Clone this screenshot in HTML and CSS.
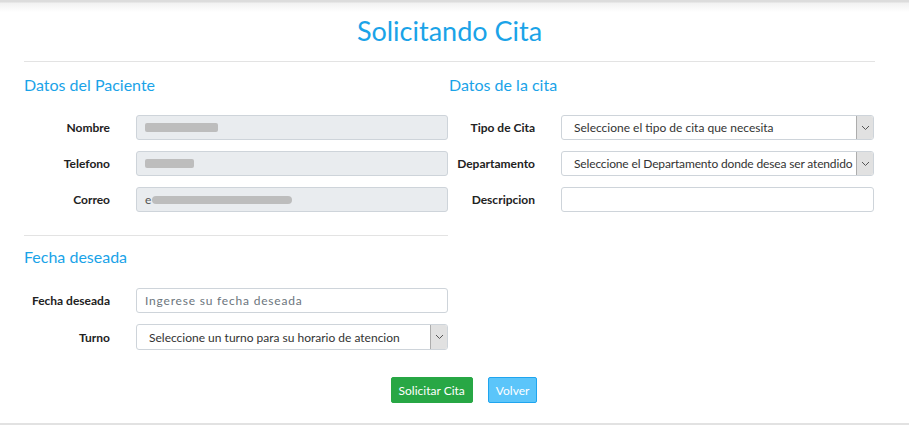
FILE: index.html
```html
<!DOCTYPE html>
<html lang="es">
<head>
<meta charset="utf-8">
<title>Solicitando Cita</title>
<link rel="stylesheet" href="styles.css">
</head>
<body>
<div class="topshade"></div>
<main class="page">
  <h1 class="title">Solicitando Cita</h1>
  <hr class="rule">
  <div class="columns">
    <section class="col">
      <h2 class="heading">Datos del Paciente</h2>
      <div class="form">
        <label class="lbl">Nombre</label>
        <div class="field disabled"><span class="redact r1"></span></div>
        <label class="lbl">Telefono</label>
        <div class="field disabled"><span class="redact r2"></span></div>
        <label class="lbl">Correo</label>
        <div class="field disabled"><span class="ch">e</span><span class="redact r3"></span></div>
      </div>
      <hr class="rule rule-mid">
      <h2 class="heading heading-2">Fecha deseada</h2>
      <div class="form">
        <label class="lbl">Fecha deseada</label>
        <div class="field"><span class="placeholder">Ingerese su fecha deseada</span></div>
        <label class="lbl">Turno</label>
        <div class="field select tall"><span class="sel-text">Seleccione un turno para su horario de atencion</span><span class="arrow"><svg width="9" height="6" viewBox="0 0 9 6"><path d="M1 1 L4.5 4.5 L8 1" fill="none" stroke="#555" stroke-width="1"/></svg></span></div>
      </div>
    </section>
    <section class="col col-right">
      <h2 class="heading">Datos de la cita</h2>
      <div class="form">
        <label class="lbl">Tipo de Cita</label>
        <div class="field select"><span class="sel-text">Seleccione el tipo de cita que necesita</span><span class="arrow"><svg width="9" height="6" viewBox="0 0 9 6"><path d="M1 1 L4.5 4.5 L8 1" fill="none" stroke="#555" stroke-width="1"/></svg></span></div>
        <label class="lbl">Departamento</label>
        <div class="field select"><span class="sel-text tight">Seleccione el Departamento donde desea ser atendido</span><span class="arrow"><svg width="9" height="6" viewBox="0 0 9 6"><path d="M1 1 L4.5 4.5 L8 1" fill="none" stroke="#555" stroke-width="1"/></svg></span></div>
        <label class="lbl">Descripcion</label>
        <div class="field"></div>
      </div>
    </section>
  </div>
  <div class="actions">
    <button class="btn btn-green">Solicitar Cita</button>
    <button class="btn btn-blue">Volver</button>
  </div>
</main>
<div class="bottomline"></div>
</body>
</html>
```

FILE: styles.css
```css
html, body {
  margin: 0;
  padding: 0;
  background: #fff;
  font-family: Lato, "Open Sans", sans-serif;
  color: #212529;
}
.topshade {
  height: 12px;
  background: linear-gradient(#dcdcdc 0, #dcdcdc 2px, #f1f1f1 3px, #fff 12px);
}
.page {
  width: 851px;
  margin-left: 24px;
}
.title {
  margin: 0;
  height: 49px;
  line-height: 38px;
  text-align: center;
  font-weight: 400;
  font-size: 27px;
  color: #1aa3e8;
}
.rule {
  border: 0;
  border-top: 1px solid #e3e3e3;
  margin: 0;
  height: 0;
}
.columns {
  display: flex;
}
.col {
  width: 425px;
  min-width: 0;
}
.col-right {
  width: 426px;
}
.heading {
  margin: 13px 0 20px;
  font-size: 16px;
  line-height: 20px;
  font-weight: 400;
  color: #1aa3e8;
}
.heading-2 {
  margin-top: 11px;
  margin-bottom: 21px;
}
.rule-mid {
  margin-top: 23px;
  width: 424px;
}
.form {
  display: grid;
  grid-template-columns: 112px minmax(0, 1fr);
  row-gap: 11px;
  align-items: center;
}
.lbl {
  text-align: right;
  padding-right: 26px;
  font-size: 12px;
  font-weight: 700;
  color: #222;
}
.field {
  height: 23px;
  border: 1px solid #ced4da;
  border-radius: 3px;
  background: #fff;
  display: flex;
  align-items: center;
  font-size: 12px;
  margin-right: 1px;
  min-width: 0;
}
.field.tall {
  height: 24px;
}
.field.disabled {
  background: #e9ecef;
  padding-left: 8px;
}
.redact {
  display: block;
  height: 9px;
  background: #bdbdbd;
  border-radius: 2px;
}
.r1 { width: 73px; }
.r2 { width: 49px; }
.r3 { width: 140px; height: 8px; border-radius: 4px; }
.ch {
  color: #555;
  font-size: 12px;
  margin-right: 1px;
}
.placeholder {
  padding-left: 8px;
  color: #6c757d;
  letter-spacing: 0.8px;
}
.select .sel-text {
  padding-left: 12px;
  color: #333;
  white-space: nowrap;
  overflow: hidden;
  flex: 1;
  min-width: 0;
}
.select .sel-text.tight {
  letter-spacing: -0.15px;
}
.arrow {
  width: 16px;
  flex: none;
  align-self: stretch;
  background: #e1e1e1;
  border-left: 1px solid #adadad;
  display: flex;
  align-items: center;
  justify-content: center;
  border-radius: 0 2px 2px 0;
}
.actions {
  display: flex;
  justify-content: center;
  gap: 15px;
  margin-top: 27px;
  padding-left: 29px;
}
.btn {
  font-family: inherit;
  font-size: 12px;
  height: 26px;
  border-radius: 2px;
  color: #fff;
  padding: 0 7px;
  border: 1px solid transparent;
}
.btn-green {
  background: #28a745;
  border-color: #28a745;
}
.btn-blue {
  background: #5bc5fa;
  border-color: #1fa5ef;
}
.bottomline {
  margin-top: 20px;
  height: 2px;
  background: #e2e2e2;
}
```
